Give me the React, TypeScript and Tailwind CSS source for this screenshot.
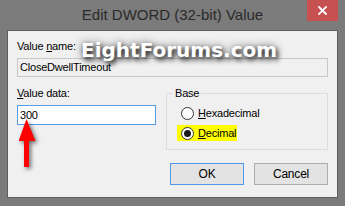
import React from "react";

function Radio({ checked }: { checked?: boolean }) {
  return (
    <span className="flex h-[13px] w-[13px] shrink-0 items-center justify-center rounded-full border border-[#333333] bg-white">
      {checked ? <span className="h-[7px] w-[7px] rounded-full bg-[#1a1a1a]" /> : null}
    </span>
  );
}

export default function App() {
  return (
    <div
      className="relative flex h-[206px] w-[345px] flex-col overflow-hidden bg-[#7b7b7b] px-[7px] pb-[8px] text-black"
      style={{ fontFamily: '"Liberation Sans", Arial, sans-serif' }}
    >
      {/* Title bar */}
      <div className="relative -mx-[7px] h-[30px] shrink-0 text-center text-[15px] leading-[30px] text-[#2a2a2a]">
        Edit DWORD (32-bit) Value
        <div className="absolute right-[7px] top-0 flex h-[21px] w-[31px] items-center justify-center bg-[#c75050]">
          <svg width="9" height="9" viewBox="0 0 9 9">
            <path d="M1 1 L8 8 M8 1 L1 8" stroke="white" strokeWidth="1.8" strokeLinecap="square" />
          </svg>
        </div>
      </div>

      {/* Client area */}
      <div className="flex flex-1 flex-col border border-[#5e5e5e] bg-[#f0f0f0] px-[9px] pt-[9px] text-[11px] leading-[13px] tracking-[-0.2px]">
        <div>
          Value <span className="underline underline-offset-[1px]">n</span>ame:
        </div>
        <div className="mt-[5px] flex h-[19px] items-center border border-[#c8c8c8] bg-[#f0f0f0] pl-[2px]">
          CloseDwellTimeout
        </div>

        <div className="mt-[10px] flex gap-[10px]">
          {/* Left column */}
          <div className="relative w-[139px]">
            <div>
              <span className="underline underline-offset-[1px]">V</span>alue data:
            </div>
            <div className="mt-[5px] flex h-[20px] items-center border border-[#569de5] bg-white pl-[2px]">
              300
            </div>
            <svg
              className="absolute left-[2px] top-[31px] drop-shadow-[2px_2px_2px_rgba(0,0,0,0.55)]"
              width="24"
              height="56"
              viewBox="0 0 24 56"
            >
              <polygon points="7.5,1 16.5,23 10,23 10,49 5,49 5,23 -0.5,23" fill="#ff0000" />
            </svg>
          </div>

          {/* Base group */}
          <fieldset className="h-[63px] w-[162px] border border-[#dcdcdc] pb-[8px] pl-[6px]">
            <legend className="px-[2px] leading-[13px]">Base</legend>
            <div className="ml-[4px] mt-[5px] flex h-[16px] w-fit items-center gap-[4px] pl-[4px] pr-[1px]">
              <Radio />
              <span>
                <span className="underline underline-offset-[1px]">H</span>exadecimal
              </span>
            </div>
            <div className="ml-[4px] mt-[4px] flex h-[16px] w-fit items-center gap-[4px] bg-[#ffff00] pl-[4px] pr-[1px]">
              <Radio checked />
              <span>
                <span className="underline underline-offset-[1px]">D</span>ecimal
              </span>
            </div>
          </fieldset>
        </div>

        <div className="mt-[13px] flex justify-end gap-[10px]">
          <div className="flex h-[22px] w-[74px] items-center justify-center border border-[#4c9ae8] bg-[#e3e3e3] text-[12px]">
            OK
          </div>
          <div className="flex h-[22px] w-[74px] items-center justify-center border border-[#adadad] bg-[#e3e3e3] text-[12px]">
            Cancel
          </div>
        </div>
      </div>

      {/* Watermark */}
      <div
        className="pointer-events-none absolute left-[81px] top-[40px] text-[20px] font-bold leading-[20px] text-white [text-shadow:2px_3px_5px_rgba(0,0,0,0.85),0_0_9px_rgba(0,0,0,0.6)]"
        style={{ fontFamily: '"DejaVu Sans", Verdana, sans-serif' }}
      >
        EightForums.com
      </div>
    </div>
  );
}
